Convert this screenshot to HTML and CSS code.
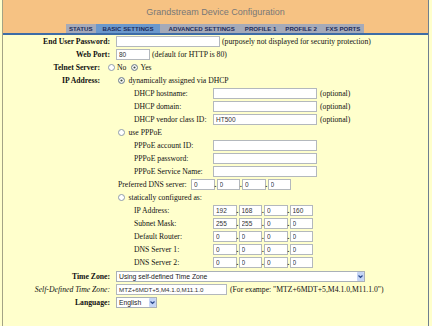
FILE: index.html
```html
<!DOCTYPE html>
<html>
<head>
<meta charset="utf-8">
<title>Grandstream Device Configuration</title>
<link rel="stylesheet" href="styles.css">
</head>
<body>
<div class="page">
  <header class="head">
    <div class="title">Grandstream Device Configuration</div>
    <nav class="tabs">
      <span class="tab t-status">STATUS</span>
      <span class="tab t-basic active">BASIC SETTINGS</span>
      <span class="tab t-adv">ADVANCED SETTINGS</span>
      <span class="tab t-p1">PROFILE 1</span>
      <span class="tab t-p2">PROFILE 2</span>
      <span class="tab t-fxs">FXS PORTS</span>
    </nav>
  </header>
  <div class="rule"></div>
  <main class="form">
    <section class="grp grp-a">
      <div class="row">
        <label class="lbl">End User Password:</label>
        <div class="fld"><input class="txt w-pass" type="password"><span class="note n-pass">(purposely not displayed for security protection)</span></div>
      </div>
      <div class="row">
        <label class="lbl">Web Port:</label>
        <div class="fld"><input class="txt w-port" value="80"><span class="note n-port">(default for HTTP is 80)</span></div>
      </div>
    </section>

    <section class="grp grp-b">
      <div class="row">
        <label class="lbl">Telnet Server:</label>
        <div class="fld">
          <span class="opt"><input type="radio" name="telnet" class="rad">No</span>
          <span class="opt"><input type="radio" name="telnet" class="rad" checked>Yes</span>
        </div>
      </div>
      <div class="row row-top">
        <label class="lbl">IP Address:</label>
        <div class="ipblock">
          <div class="sub"><input type="radio" name="ip" class="rad rad-ip" checked>dynamically assigned via DHCP</div>
          <div class="sub ind"><span class="slbl">DHCP hostname:</span><input class="txt w-long"><span class="note n-opt">(optional)</span></div>
          <div class="sub ind"><span class="slbl">DHCP domain:</span><input class="txt w-long"><span class="note n-opt">(optional)</span></div>
          <div class="sub ind"><span class="slbl">DHCP vendor class ID:</span><input class="txt w-long" value="HT500"><span class="note n-opt">(optional)</span></div>

          <div class="sub"><input type="radio" name="ip" class="rad rad-ip">use PPPoE</div>
          <div class="sub ind"><span class="slbl">PPPoE account ID:</span><input class="txt w-long"></div>
          <div class="sub ind"><span class="slbl">PPPoE password:</span><input class="txt w-long" type="password"></div>
          <div class="sub ind"><span class="slbl">PPPoE Service Name:</span><input class="txt w-long"></div>
          <div class="sub"><span class="dlbl">Preferred DNS server:</span>
            <span class="ipgrp"><input class="txt oct" value="0"><span class="dot">.</span><input class="txt oct" value="0"><span class="dot">.</span><input class="txt oct" value="0"><span class="dot">.</span><input class="txt oct" value="0"></span>
          </div>

          <div class="sub"><input type="radio" name="ip" class="rad rad-ip">statically configured as:</div>
          <div class="sub ind"><span class="slbl">IP Address:</span>
            <span class="ipgrp"><input class="txt oct" value="192"><span class="dot">.</span><input class="txt oct" value="168"><span class="dot">.</span><input class="txt oct" value="0"><span class="dot">.</span><input class="txt oct" value="160"></span>
          </div>
          <div class="sub ind"><span class="slbl">Subnet Mask:</span>
            <span class="ipgrp"><input class="txt oct" value="255"><span class="dot">.</span><input class="txt oct" value="255"><span class="dot">.</span><input class="txt oct" value="0"><span class="dot">.</span><input class="txt oct" value="0"></span>
          </div>
          <div class="sub ind"><span class="slbl">Default Router:</span>
            <span class="ipgrp"><input class="txt oct" value="0"><span class="dot">.</span><input class="txt oct" value="0"><span class="dot">.</span><input class="txt oct" value="0"><span class="dot">.</span><input class="txt oct" value="0"></span>
          </div>
          <div class="sub ind"><span class="slbl">DNS Server 1:</span>
            <span class="ipgrp"><input class="txt oct" value="0"><span class="dot">.</span><input class="txt oct" value="0"><span class="dot">.</span><input class="txt oct" value="0"><span class="dot">.</span><input class="txt oct" value="0"></span>
          </div>
          <div class="sub ind"><span class="slbl">DNS Server 2:</span>
            <span class="ipgrp"><input class="txt oct" value="0"><span class="dot">.</span><input class="txt oct" value="0"><span class="dot">.</span><input class="txt oct" value="0"><span class="dot">.</span><input class="txt oct" value="0"></span>
          </div>
        </div>
      </div>
    </section>

    <section class="grp grp-a grp-c">
      <div class="row">
        <label class="lbl">Time Zone:</label>
        <div class="fld">
          <div class="sel sel-tz"><span class="sel-text">Using self-defined Time Zone</span><span class="arrow"><svg viewBox="0 0 7 9" width="7" height="9"><path d="M1.5 3.5 L3.5 5.5 L5.5 3.5" fill="none" stroke="#2b4a8c" stroke-width="1.2"/></svg></span></div>
        </div>
      </div>
      <div class="row">
        <label class="lbl lbl-it">Self-Defined Time Zone:</label>
        <div class="fld"><input class="txt w-sd" value="MTZ+6MDT+5,M4.1.0,M11.1.0"><span class="note n-sd">(For exampe: "MTZ+6MDT+5,M4.1.0,M11.1.0")</span></div>
      </div>
      <div class="row">
        <label class="lbl">Language:</label>
        <div class="fld">
          <div class="sel sel-lang"><span class="sel-text">English</span><span class="arrow"><svg viewBox="0 0 7 9" width="7" height="9"><path d="M1.5 3.5 L3.5 5.5 L5.5 3.5" fill="none" stroke="#2b4a8c" stroke-width="1.2"/></svg></span></div>
        </div>
      </div>
    </section>
  </main>
</div>
</body>
</html>
```

FILE: styles.css
```css
html, body {
  margin: 0;
  padding: 0;
  background: #ffffcc;
}

.page {
  margin-left: 2px;
  width: 425px;
  min-height: 326px;
  border-left: 1px solid #a3a385;
  border-right: 1px solid #6f7f90;
  background: #ffffcc;
}

.head {
  height: 33px;
  background: #f6c283;
  display: flex;
  flex-direction: column;
}

.title {
  height: 24px;
  line-height: 24px;
  text-align: center;
  font-family: "Liberation Sans", Arial, sans-serif;
  font-size: 9px;
  color: #787878;
}

.tabs {
  display: flex;
  align-items: stretch;
  height: 9px;
  margin-left: 63px;
  width: 298px;
  background: #a5aab9;
}

.tab {
  font-family: "Liberation Sans", Arial, sans-serif;
  font-weight: bold;
  font-size: 6.1px;
  line-height: 9px;
  color: #1d2b5a;
  padding: 0 4px;
  white-space: nowrap;
}

.t-status { padding-left: 3px; }
.t-basic { padding: 0 6px; margin-left: 0; }
.t-adv { margin-left: 5px; }
.t-p1 { margin-left: 2px; }
.t-p2 { margin-left: 1px; }
.t-fxs { margin-left: 1px; }

.tab.active {
  background: #6b98cc;
}

.rule {
  height: 2px;
  background: #3d6ca6;
}

.form {
  font-family: "Liberation Serif", "Times New Roman", serif;
  font-size: 7.7px;
  color: #111;
}

.grp-a .row {
  display: grid;
  grid-template-columns: 107px 1fr;
  column-gap: 6px;
  height: 13px;
  align-items: center;
}

.grp-b .row {
  display: grid;
  grid-template-columns: 97px 1fr;
  column-gap: 8px;
  height: 13px;
  align-items: center;
}

.grp-b .row-top {
  height: auto;
  align-items: start;
}

.row-top .lbl {
  line-height: 13px;
}

.grp-c {
  margin-top: 1px;
}

.lbl {
  text-align: right;
  font-weight: bold;
  white-space: nowrap;
}

.lbl-it {
  font-weight: normal;
  font-style: italic;
}

.fld {
  display: flex;
  align-items: center;
  white-space: nowrap;
}

.txt {
  box-sizing: border-box;
  height: 11px;
  margin: 0;
  padding: 0 2px;
  border: 1px solid #b3b8bd;
  background: #fff;
  font-family: "Liberation Sans", Arial, sans-serif;
  font-size: 6.5px;
  color: #333;
  outline: none;
}

.w-pass { width: 104px; }
.w-port { width: 34px; }
.w-long { width: 104px; }
.w-sd { width: 111px; font-size: 6.2px; }

.note {
  white-space: nowrap;
}
.n-pass { margin-left: 2px; }
.n-port { margin-left: 2px; }
.n-opt { margin-left: 3px; }
.n-sd { margin-left: 3px; }

.opt {
  display: inline-flex;
  align-items: center;
  margin-right: 5px;
}

.rad {
  appearance: none;
  -webkit-appearance: none;
  box-sizing: border-box;
  width: 7px;
  height: 7px;
  margin: 0 2px 0 0;
  border: 1px solid #8e9cab;
  border-radius: 50%;
  background: #fff;
  flex: none;
}

.rad:checked {
  background: #3c4a3c;
  box-shadow: inset 0 0 0 1.4px #fff;
}

.rad-ip {
  margin-right: 3.5px;
}

.ipblock {
  display: flex;
  flex-direction: column;
  padding-left: 10px;
}

.sub {
  height: 13px;
  display: flex;
  align-items: center;
  white-space: nowrap;
}

.sub.ind {
  padding-left: 16px;
}

.slbl {
  width: 79px;
  flex: none;
}

.dlbl {
  width: 73px;
  flex: none;
}

.ipgrp {
  display: flex;
  align-items: center;
}

.oct {
  width: 23.5px;
}

.dot {
  width: 2px;
  height: 11px;
  font-family: "Liberation Sans", Arial, sans-serif;
  font-size: 8px;
  font-weight: bold;
  line-height: 11px;
  color: #333;
  overflow: visible;
  text-indent: -0.3px;
}

.sel {
  box-sizing: border-box;
  height: 11px;
  display: flex;
  align-items: center;
  justify-content: space-between;
  border: 1px solid #a9b0b8;
  background: #fff;
  padding-left: 2px;
  padding-right: 0;
  font-family: "Liberation Sans", Arial, sans-serif;
  font-size: 6.8px;
  color: #222;
}

.sel-tz { width: 249px; }
.sel-lang { width: 41px; }

.arrow {
  width: 7px;
  height: 9px;
  background: #c5d5f5;
  border-radius: 1px;
  display: flex;
  align-items: center;
  justify-content: center;
}

.arrow svg {
  display: block;
}
```
